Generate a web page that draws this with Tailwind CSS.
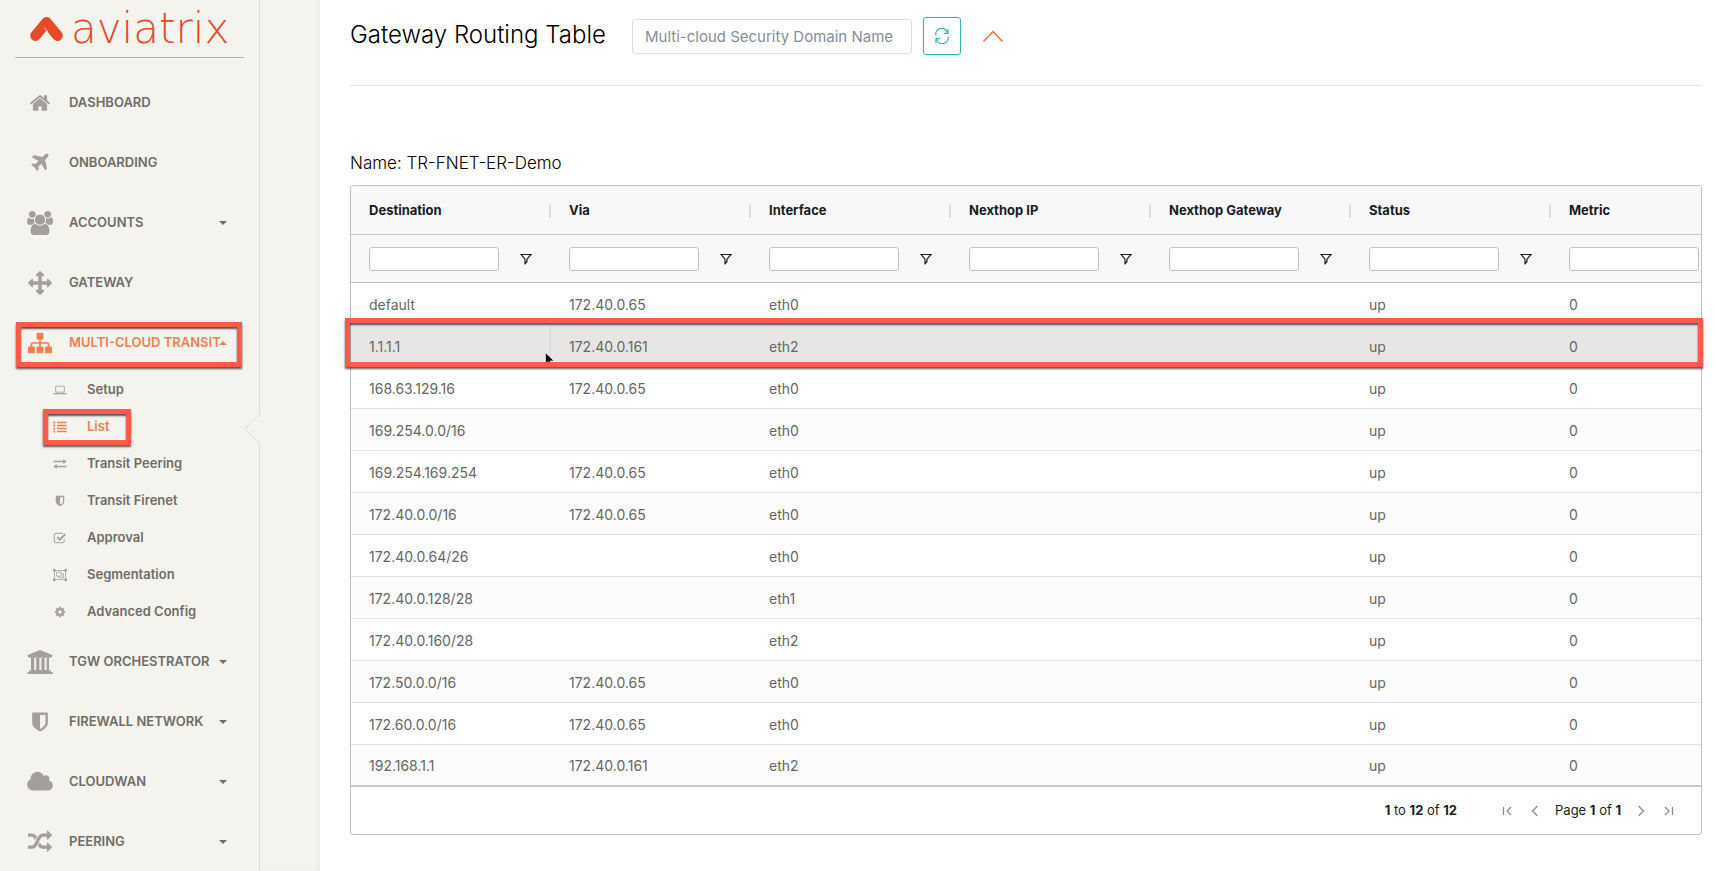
<!DOCTYPE html>
<html lang="en">
<head>
<meta charset="utf-8">
<meta name="viewport" content="width=device-width, initial-scale=1">
<title>Aviatrix - Gateway Routing Table</title>
<script src="https://cdn.jsdelivr.net/npm/@tailwindcss/browser@4"></script>
</head>
<body class="bg-white font-['Inter',sans-serif] text-black">
<svg class="hidden" aria-hidden="true">
  <symbol id="home" viewBox="0 0 1792 1792"><path d="M1472 992v480q0 26-19 45t-45 19h-384v-384h-256v384h-384q-26 0-45-19t-19-45v-480q0-1 .5-3t.5-3l575-474 575 474q1 2 1 6zm223-69l-62 74q-8 9-21 11h-3q-13 0-21-7l-692-577-692 577q-12 8-24 7-13-2-21-11l-62-74q-8-10-7-23.5t11-21.5l719-599q32-26 76-26t76 26l244 204v-195q0-14 9-23t23-9h192q14 0 23 9t9 23v408l219 182q10 8 11 21.5t-7 23.5z"/></symbol>
  <symbol id="plane" viewBox="0 0 1792 1792"><path d="M1568 160q44 52 12 148t-108 172l-161 161 160 696q5 19-12 33l-128 96q-7 6-19 6-4 0-7-1-15-3-21-16l-279-508-259 259 53 194q5 17-8 31l-96 96q-9 9-23 9h-2q-15-2-24-13l-189-252-252-189q-11-7-13-23-1-13 9-25l96-97q9-9 23-9 6 0 8 1l194 53 259-259-508-279q-14-8-17-24-2-16 9-27l128-128q14-13 30-8l665 159 160-160q76-76 172-108t148 12z"/></symbol>
  <symbol id="users" viewBox="0 0 1920 1792"><path d="M593 896q-162 5-265 128h-134q-82 0-138-40.5t-56-118.5q0-353 124-353 6 0 43.5 21t97.5 42.5 119 21.5q67 0 133-23-5 37-5 66 0 159 92 293zm1071 637q0 120-73 189.5t-194 69.5h-874q-121 0-194-69.5t-73-189.5q0-53 3.5-103.5t14-109 26.5-108.5 43-97.5 62-81 85.5-53.5 111.5-20q10 0 43 21.5t73 48 107 48 135 21.5 135-21.5 107-48 73-48 43-21.5q61 0 111.5 20t85.5 53.5 62 81 43 97.5 26.5 108.5 14 109 3.5 103.5zm-1024-1277q0 106-75 181t-181 75-181-75-75-181 75-181 181-75 181 75 75 181zm704 384q0 159-112.5 271.5t-271.5 112.5-271.5-112.5-112.5-271.5 112.5-271.5 271.5-112.5 271.5 112.5 112.5 271.5zm576 225q0 78-56 118.5t-138 40.5h-134q-103-123-265-128 92-134 92-293 0-29-5-66 66 23 133 23 59 0 119-21.5t97.5-42.5 43.5-21q124 0 124 353zm-128-609q0 106-75 181t-181 75-181-75-75-181 75-181 181-75 181 75 75 181z"/></symbol>
  <symbol id="arrows" viewBox="0 0 1792 1792"><path d="M1792 896q0 26-19 45l-256 256q-19 19-45 19t-45-19-19-45v-128h-384v384h128q26 0 45 19t19 45-19 45l-256 256q-19 19-45 19t-45-19l-256-256q-19-19-19-45t19-45 45-19h128v-384h-384v128q0 26-19 45t-45 19-45-19l-256-256q-19-19-19-45t19-45l256-256q19-19 45-19t45 19 19 45v128h384v-384h-128q-26 0-45-19t-19-45 19-45l256-256q19-19 45-19t45 19l256 256q19 19 19 45t-19 45-45 19h-128v384h384v-128q0-26 19-45t45-19 45 19l256 256q19 19 19 45z"/></symbol>
  <symbol id="sitemap" viewBox="0 0 1792 1792"><path d="M1792 1248v320q0 40-28 68t-68 28h-320q-40 0-68-28t-28-68v-320q0-40 28-68t68-28h96v-192h-512v192h96q40 0 68 28t28 68v320q0 40-28 68t-68 28h-320q-40 0-68-28t-28-68v-320q0-40 28-68t68-28h96v-192h-512v192h96q40 0 68 28t28 68v320q0 40-28 68t-68 28h-320q-40 0-68-28t-28-68v-320q0-40 28-68t68-28h96v-192q0-52 38-90t90-38h512v-192h-96q-40 0-68-28t-28-68v-320q0-40 28-68t68-28h320q40 0 68 28t28 68v320q0 40-28 68t-68 28h-96v192h512q52 0 90 38t38 90v192h96q40 0 68 28t28 68z"/></symbol>
  <symbol id="laptop" viewBox="0 0 1920 1792"><path d="M416 1280q-66 0-113-47t-47-113v-704q0-66 47-113t113-47h1088q66 0 113 47t47 113v704q0 66-47 113t-113 47h-1088zm-32-864v704q0 13 9.500 22.500t22.500 9.500h1088q13 0 22.500-9.500t9.500-22.500v-704q0-13-9.500-22.500t-22.500-9.500h-1088q-13 0-22.500 9.500t-9.500 22.500zm1376 928h160v96q0 40-47 68t-113 28h-1600q-66 0-113-28t-47-68v-96h1760zm-720 96q16 0 16-16t-16-16h-160q-16 0-16 16t16 16h160z"/></symbol>
  <symbol id="cloud" viewBox="0 0 1920 1792"><path d="M1920 1152q0 159-112.500 271.500t-271.500 112.500h-1088q-185 0-316.500-131.500t-131.500-316.500q0-132 71-241.500t187-163.500q-2-28-2-43 0-212 150-362t362-150q158 0 286.500 88t187.500 230q70-62 166-62 106 0 181 75t75 181q0 75-41 138 129 30 213 134.500t84 239.500z"/></symbol>
  <symbol id="shield" viewBox="0 0 1792 1792"><path d="M1344 960v-640h-448v1137q119-63 213-137 235-184 235-360zm192-768v768q0 86-33.500 170.500t-83 150-118 127.500-126.500 103-121 77.500-89.500 49.500-42.500 20q-12 6-26 6t-26-6q-16-7-42.500-20t-89.500-49.500-121-77.500-126.500-103-118-127.500-83-150-33.500-170.500v-768q0-26 19-45t45-19h1152q26 0 45 19t19 45z"/></symbol>
  <symbol id="random" viewBox="0 0 1792 1792"><path d="M666 481q-60 92-137 273-22-45-37-72.500t-40.500-63.500-51-56.500-63-35-81.500-14.500h-224q-14 0-23-9t-9-23v-192q0-14 9-23t23-9h224q250 0 410 225zm1126 799q0 14-9 23l-320 320q-9 9-23 9-13 0-22.500-9.500t-9.500-22.500v-192q-32 0-85 .5t-81 1-73-1-71-5-64-10.500-63-18.500-58-28.500-59-40-55-53.500-56-69.500q59-93 136-273 22 45 37 72.500t40.500 63.500 51 56.500 63 35 81.500 14.500h256v-192q0-14 9-23t23-9q12 0 24 10l319 319q9 9 9 23zm0-896q0 14-9 23l-320 320q-9 9-23 9-13 0-22.500-9.500t-9.500-22.500v-192h-256q-48 0-87 15t-69 45-51 61.500-45 77.500q-32 62-78 171-29 66-49.500 111t-54 105-64 100-74 83-90 68.500-106.500 42-128 16.500h-224q-14 0-23-9t-9-23v-192q0-14 9-23t23-9h224q48 0 87-15t69-45 51-61.500 45-77.500q32-62 78-171 29-66 49.500-111t54-105 64-100 74-83 90-68.500 106.500-42 128-16.500h256v-192q0-14 9-23t23-9q12 0 24 10l319 319q9 9 9 23z"/></symbol>
  <symbol id="cog" viewBox="0 0 1792 1792"><path d="M1152 896q0-106-75-181t-181-75-181 75-75 181 75 181 181 75 181-75 75-181zm512-109v222q0 12-8 23t-20 13l-185 28q-19 54-39 91 35 50 107 138 10 12 10 25t-9 23q-27 37-99 108t-94 71q-12 0-26-9l-138-108q-44 23-91 38-16 136-29 186-7 28-36 28h-222q-14 0-24.500-8.500t-11.500-21.500l-28-184q-49-16-90-37l-141 107q-10 9-25 9-14 0-25-11-126-114-165-168-7-10-7-23 0-12 8-23 15-21 51-66.500t54-70.500q-27-50-41-99l-183-27q-13-2-21-12.500t-8-23.500v-222q0-12 8-23t19-13l186-28q14-46 39-92-40-57-107-138-10-12-10-24 0-10 9-23 26-36 98.500-107.500t94.500-71.500q13 0 26 10l138 107q44-23 91-38 16-136 29-186 7-28 36-28h222q14 0 24.500 8.500t11.500 21.500l28 184q49 16 90 37l142-107q9-9 24-9 13 0 25 10 129 119 165 170 7 8 7 22 0 12-8 23-15 21-51 66.500t-54 70.500q26 50 41 98l183 28q13 2 21 12.500t8 23.500z"/></symbol>
  <symbol id="bank" viewBox="0 0 26 24"><path d="M13 0 25.500 5v1.700H24v1H2v-1H.5V5zM4 8h3.200v12h2V8h3.200v12h2V8h3.200v12h2V8H22v12.500h2V22H2v-1.500h2zM.5 22h25.200v2H.5z"/></symbol>
  <symbol id="list" viewBox="0 0 14 12"><path d="M1.300.5h1v2h-2v-2zm0 3h1v2h-2v-2zm0 3h1v2h-2v-2zm0 3h1v2h-2v-2zM4 .7h9.700v1.600H4zm0 3h9.700v1.600H4zm0 3h9.700v1.600H4zm0 3h9.700v1.600H4z"/></symbol>
  <symbol id="exchange" viewBox="0 0 14 12"><path d="M.7 2.700h9.600V1l3.200 2.500L10.300 6V4.300H.7zM13.300 9.300H3.700V11L.5 8.500 3.700 6v1.700h9.600z"/></symbol>
  <symbol id="check" viewBox="0 0 14 12"><path d="M11.200 7.300V9a1.700 1.700 0 0 1-1.700 1.700H3A1.700 1.700 0 0 1 1.300 9V3A1.700 1.700 0 0 1 3 1.300h7" fill="none" stroke="currentColor"/><path d="m3.500 5.500 1.300-1.200 2 2L11.600 1.500l1.400 1.300-6.200 6.100z"/></symbol>
  <symbol id="group" viewBox="0 0 14 12"><g fill="none" stroke="currentColor" stroke-width=".8"><path d="M1.500 1.500h11v9h-11zM3.600 3.200h4.600v4H3.600zM8.200 4.800h2.300v4H5.800V7.200"/></g><path d="M0 0h2.500v2.500H0zm11.500 0H14v2.500h-2.500zM0 9.500h2.500V12H0zm11.500 0H14V12h-2.500z"/></symbol>
  <symbol id="down" viewBox="0 0 8 4"><path d="M0 0h8L4 4z"/></symbol>
  <symbol id="up" viewBox="0 0 8 4"><path d="M0 4h8L4 0z"/></symbol>
  <symbol id="filter" viewBox="0 0 12 12"><path d="M1 1.500h10L7 6.200v2.600L5 10.600V6.200z" fill="none" stroke="currentColor" stroke-width="1.200"/></symbol>
</svg>

<div class="flex h-screen overflow-hidden">
  <aside class="relative w-[260px] shrink-0 border-r border-[#dcdcd8] bg-[#f4f3ee]">
    <a href="#" aria-label="aviatrix" class="mx-[15px] flex h-[58px] items-center gap-2 border-b border-[#b4b5aa] pl-[15px] text-[#e54b27]">
      <svg class="h-6 w-[33px]" viewBox="0 0 33 24"><path d="M5.500 18.700 16.500 5.300l11 13.400" fill="none" stroke="currentColor" stroke-width="10.500" stroke-linecap="round" stroke-linejoin="round"/><path d="m14.200 10.500 4 5" stroke="#f4f3ee" stroke-width=".8"/></svg>
      <span class="font-['DejaVu_Sans_Light','DejaVu_Sans',sans-serif] text-[42px] leading-[48px] font-extralight">aviatrix</span>
    </a>
    <nav class="mt-[15px] text-[13px] font-semibold text-[#6f6d68]">
      <ul id="menu"></ul>
    </nav>
    <!-- Callout frames over the active entries -->
    <div class="absolute top-[322px] left-4 h-[45px] w-[226px] border-5 border-[#ff5a4b] shadow-[0_2px_2px_rgba(0,0,0,0.65),inset_0_2px_2px_rgba(0,0,0,0.65)]"></div>
    <div class="absolute top-[409px] left-[43px] h-9 w-[88px] border-5 border-[#ff5a4b] shadow-[0_2px_2px_rgba(0,0,0,0.65),inset_0_2px_2px_rgba(0,0,0,0.65)]"></div>
    <svg class="absolute top-[413px] -right-px h-8 w-4" viewBox="0 0 16 32"><path d="M16 1 1 16l15 15z" fill="#f4f3ee"/><path d="M15.500 0v1L1 16l14.500 15v1" fill="none" stroke="#dcdcd8"/></svg>
  </aside>
  <div class="w-[60px] shrink-0 bg-[#f4f3ee] shadow-[inset_-4px_0_4px_-2px_rgba(0,0,0,0.04)]"></div>

  <main class="min-w-0 flex-1 pr-[13px] pl-[30px]">
    <header class="flex h-[86px] items-start border-b border-[#e4e4e4] pt-[17px]">
      <h1 class="w-[282px] text-2xl leading-9 font-light">Gateway Routing Table</h1>
      <input type="text" aria-label="Multi-cloud Security Domain Name" placeholder="Multi-cloud Security Domain Name" class="mt-[2px] h-[35px] w-[280px] rounded-[3px] border border-[#dcdee0] px-3 text-[15px] placeholder:text-[#868e96]">
      <button type="button" aria-label="Refresh" class="ml-[11px] flex h-[38px] w-[38px] items-center justify-center rounded-[3px] border border-[#2fb5b9] text-[#2fb5b9] shadow-sm">
        <svg class="size-4" viewBox="0 0 16 16" fill="none" stroke="currentColor" stroke-width="1.200"><path d="M1.800 7.500A6 6 0 0 1 13.600 5M14 1v4.300H9.800M14.200 8.500A6 6 0 0 1 2.400 11M2 15v-4.300h4.200"/></svg>
      </button>
      <button type="button" aria-label="Collapse" class="ml-5 flex h-[38px] w-6 items-center justify-center text-[#ff6a3d]">
        <svg class="h-3 w-5" viewBox="0 0 20 12" fill="none" stroke="currentColor" stroke-width="1.500"><path d="m.500 11.500 9.500-10 9.500 10"/></svg>
      </button>
    </header>

    <h2 class="mt-[65px] mb-[10px] text-[17px] leading-6 font-light">Name: TR-FNET-ER-Demo</h2>

    <section class="relative">
      <div class="overflow-hidden rounded-[3px] border border-[#bdc3c7]">
        <table class="w-[1400px] table-fixed border-separate border-spacing-0 text-left">
          <thead class="bg-[#f8f8f8] text-[13px] text-[#181d1f]">
            <tr id="heads"></tr>
            <tr id="filters"></tr>
          </thead>
          <tbody id="rows" class="text-sm text-[#666666]"></tbody>
        </table>
        <div class="flex h-[47px] items-center justify-end gap-3 pr-6 text-[13px] text-[#181d1f]">
          <p class="mr-[30px]"><b class="font-bold">1</b> to <b class="font-bold">12</b> of <b class="font-bold">12</b></p>
          <button type="button" aria-label="First page" class="text-[#8b8e8f]"><svg class="size-4" viewBox="0 0 16 16" fill="none" stroke="currentColor" stroke-width="1.300"><path d="M4.500 4v8M12 4 8 8l4 4"/></svg></button>
          <button type="button" aria-label="Previous page" class="text-[#8b8e8f]"><svg class="size-4" viewBox="0 0 16 16" fill="none" stroke="currentColor" stroke-width="1.300"><path d="M10.500 3 5.500 8l5 5"/></svg></button>
          <p>Page <b class="font-bold">1</b> of <b class="font-bold">1</b></p>
          <button type="button" aria-label="Next page" class="text-[#8b8e8f]"><svg class="size-4" viewBox="0 0 16 16" fill="none" stroke="currentColor" stroke-width="1.300"><path d="m5.500 3 5 5-5 5"/></svg></button>
          <button type="button" aria-label="Last page" class="text-[#8b8e8f]"><svg class="size-4" viewBox="0 0 16 16" fill="none" stroke="currentColor" stroke-width="1.300"><path d="m4 4 4 4-4 4M11.500 4v8"/></svg></button>
        </div>
      </div>
      <!-- Mouse pointer and callout frame on the selected route -->
      <svg class="absolute top-[167px] left-[195px] h-[14px] w-[10px]" viewBox="0 0 10 14"><path d="M.5.8v11l2.600-2.300L5 13.500l1.800-.8-1.600-3.700H9z" stroke="#fff" stroke-width=".6"/></svg>
      <div class="absolute top-[133px] -right-px -left-[5px] h-[49px] border-5 border-[#ff5a4b] shadow-[0_2px_2px_rgba(0,0,0,0.65),inset_0_2px_2px_rgba(0,0,0,0.65)]"></div>
    </section>
  </main>
</div>

<script>
const icon = (id, cls) => `<svg class="${cls}" fill="currentColor" aria-hidden="true"><use href="#${id}"/></svg>`;

const menu = [
  ['home', 'DASHBOARD', '', 'h-[22px] w-[22px]'],
  ['plane', 'ONBOARDING', '', 'h-[22px] w-[22px]'],
  ['users', 'ACCOUNTS', 'down', 'h-6 w-[26px]'],
  ['arrows', 'GATEWAY', '', 'h-6 w-6'],
  ['sitemap', 'MULTI-CLOUD TRANSIT', 'up', 'h-6 w-6'],
  ['bank', 'TGW ORCHESTRATOR', 'down', 'h-6 w-[26px]'],
  ['shield', 'FIREWALL NETWORK', 'down', 'h-[22px] w-[22px]'],
  ['cloud', 'CLOUDWAN', 'down', 'h-6 w-[26px]'],
  ['random', 'PEERING', 'down', 'h-6 w-6'],
];
const sub = [['laptop', 'Setup'], ['list', 'List'], ['exchange', 'Transit Peering'], ['shield', 'Transit Firenet'],
  ['check', 'Approval'], ['group', 'Segmentation'], ['cog', 'Advanced Config']];

document.getElementById('menu').innerHTML = menu.map(([id, label, caret, size]) => {
  const open = caret === 'up';
  const children = open ? `<ul>${sub.map(([i, t]) =>
    `<li><a href="#" class="flex h-[37px] items-center pb-1 pl-[53px] ${t === 'List' ? 'text-[#f07f52]' : ''}"><span class="flex w-[34px] ${t === 'List' ? '' : 'text-[#a3a09b]'}">${icon(i, 'h-3 w-[14px]')}</span>${t}</a></li>`).join('')}</ul>` : '';
  return `<li><a href="#" class="flex h-[60px] items-center pr-8 pl-[25px] ${open ? 'text-[#f07f52]' : ''}">
    <span class="mr-[14px] flex w-[30px] shrink-0 justify-center ${open ? '' : 'text-[#a3a09b]'}">${icon(id, size)}</span>
    <span class="min-w-0 flex-1 whitespace-nowrap">${label}</span>${caret ? icon(caret, 'h-1 w-2 shrink-0') : ''}</a>${children}</li>`;
}).join('');

const cols = ['Destination', 'Via', 'Interface', 'Nexthop IP', 'Nexthop Gateway', 'Status', 'Metric'];
document.getElementById('heads').innerHTML = cols.map((c, i) =>
  `<th scope="col" class="h-[49px] border-b border-[#bdc3c7] p-0 pt-px font-bold"><div class="flex items-center justify-between pl-[18px]">${c}${i < 6 ? '<span class="h-[14px] w-[2px] bg-[#dcdfe1]"></span>' : ''}</div></th>`).join('');
document.getElementById('filters').innerHTML = cols.map(c =>
  `<td class="h-12 border-b border-[#bdc3c7] p-0"><div class="flex items-center gap-[21px] pl-[18px]"><input type="text" aria-label="Filter ${c}" class="h-6 w-[130px] rounded-[3px] border border-[#bdc3c7] bg-white px-1"><button type="button" aria-label="${c} filter menu">${icon('filter', 'size-3')}</button></div></td>`).join('');

const routes = [
  ['default', '172.40.0.65', 'eth0'], ['1.1.1.1', '172.40.0.161', 'eth2'], ['168.63.129.16', '172.40.0.65', 'eth0'],
  ['169.254.0.0/16', '', 'eth0'], ['169.254.169.254', '172.40.0.65', 'eth0'], ['172.40.0.0/16', '172.40.0.65', 'eth0'],
  ['172.40.0.64/26', '', 'eth0'], ['172.40.0.128/28', '', 'eth1'], ['172.40.0.160/28', '', 'eth2'],
  ['172.50.0.0/16', '172.40.0.65', 'eth0'], ['172.60.0.0/16', '172.40.0.65', 'eth0'], ['192.168.1.1', '172.40.0.161', 'eth2'],
];
document.getElementById('rows').innerHTML = routes.map((r, n) => {
  const bg = n === 1 ? 'bg-[#e8e6e4]' : n % 2 ? 'bg-[#fcfcfc]' : 'bg-white';
  const line = n === 11 ? 'border-b-2 border-b-[#c5cad0]' : 'border-b border-b-[#dde2eb]';
  return `<tr class="${bg}">${[...r, '', '', 'up', '0'].map((v, c) =>
    `<td class="h-[42px] pt-[2px] pr-0 pb-0 pl-[18px] ${line} ${n === 1 && c === 0 ? 'border-r border-r-[#d5d5d5]' : ''}">${v}</td>`).join('')}</tr>`;
}).join('');
</script>
</body>
</html>
